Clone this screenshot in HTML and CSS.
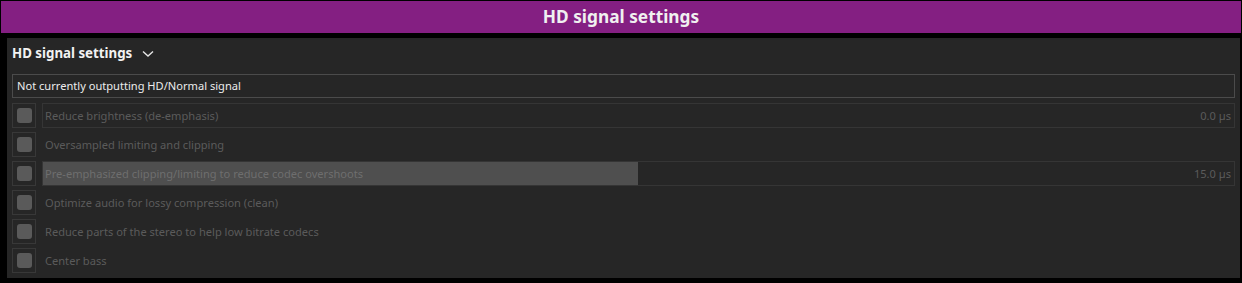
FILE: index.html
```html
<!DOCTYPE html>
<html>
<head>
<meta charset="utf-8">
<link rel="stylesheet" href="styles.css">
</head>
<body>
<div class="app">
  <div class="topbar">HD signal settings</div>
  <div class="panel">
    <div class="title">
      <span>HD signal settings</span>
      <svg class="chev" width="12" height="8" viewBox="0 0 12 8"><path d="M1 1.5 L6 6 L11 1.5" fill="none" stroke="#e6e6e6" stroke-width="1.4"/></svg>
    </div>
    <div class="status">Not currently outputting HD/Normal signal</div>
    <div class="rows">
      <div class="row">
        <div class="cb"><span></span></div>
        <div class="slider framed"><span class="lbl">Reduce brightness (de-emphasis)</span><span class="val">0.0 µs</span></div>
      </div>
      <div class="row">
        <div class="cb"><span></span></div>
        <div class="slider"><span class="lbl">Oversampled limiting and clipping</span></div>
      </div>
      <div class="row">
        <div class="cb"><span></span></div>
        <div class="slider framed"><div class="fill" style="width:595px"></div><span class="lbl">Pre-emphasized clipping/limiting to reduce codec overshoots</span><span class="val">15.0 µs</span></div>
      </div>
      <div class="row">
        <div class="cb"><span></span></div>
        <div class="slider"><span class="lbl">Optimize audio for lossy compression (clean)</span></div>
      </div>
      <div class="row">
        <div class="cb"><span></span></div>
        <div class="slider"><span class="lbl">Reduce parts of the stereo to help low bitrate codecs</span></div>
      </div>
      <div class="row">
        <div class="cb"><span></span></div>
        <div class="slider"><span class="lbl">Center bass</span></div>
      </div>
    </div>
  </div>
</div>
</body>
</html>
```
FILE: styles.css
```css
html, body {
  margin: 0;
  padding: 0;
  background: #000;
  font-family: "Noto Sans", "Open Sans", sans-serif;
}
.app {
  width: 1242px;
  height: 283px;
  box-sizing: border-box;
  padding: 1px;
  overflow: hidden;
}
.topbar {
  height: 32px;
  background: #841f82;
  color: #f0f0f0;
  font-weight: bold;
  font-size: 17.3px;
  line-height: 32px;
  text-align: center;
}
.panel {
  margin: 5px 1px 0 6px;
  height: 240px;
  box-sizing: border-box;
  background: #262626;
  padding: 0 5px 5px 5px;
}
.title {
  height: 30px;
  margin-bottom: 6px;
  display: flex;
  align-items: center;
  color: #f2f2f2;
  font-weight: bold;
  font-size: 13.3px;
}
.chev {
  margin-left: 10px;
  margin-top: 1px;
}
.status {
  height: 24px;
  box-sizing: border-box;
  border: 1px solid #4b4b4b;
  padding-left: 4px;
  color: #ececec;
  font-size: 11.1px;
  line-height: 22px;
}
.rows {
  margin-top: 5px;
  display: flex;
  flex-direction: column;
  gap: 4px;
}
.row {
  height: 25px;
  display: flex;
  gap: 6px;
}
.cb {
  width: 24px;
  height: 25px;
  box-sizing: border-box;
  border: 1px solid #383838;
  display: flex;
  align-items: center;
  justify-content: center;
}
.cb span {
  width: 15px;
  height: 15px;
  border-radius: 3px;
  background: #5a5a5a;
}
.slider {
  flex: 1;
  position: relative;
  box-sizing: border-box;
  border: 1px solid transparent;
  display: flex;
  align-items: center;
  justify-content: space-between;
  padding: 0 3px 1px 2px;
  font-size: 11.1px;
  color: #5b5b5b;
}
.slider.framed {
  border-color: #353535;
}
.fill {
  position: absolute;
  left: 0;
  top: 0;
  bottom: 0;
  background: #4f4f4f;
}
.lbl, .val {
  position: relative;
}
.fill + .lbl {
  color: #6e6e6e;
}
```
